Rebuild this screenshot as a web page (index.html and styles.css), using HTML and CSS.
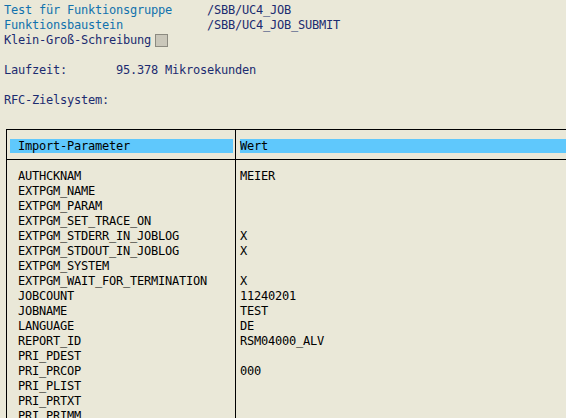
FILE: index.html
```html
<!DOCTYPE html>
<html lang="de">
<head>
<meta charset="utf-8">
<title>Funktionsbaustein Test</title>
<link rel="stylesheet" href="styles.css">
</head>
<body>
<div class="page">
  <div class="info">
    <div class="kv"><span class="label">Test für Funktionsgruppe</span><span class="val">/SBB/UC4_JOB</span></div>
    <div class="kv"><span class="label">Funktionsbaustein</span><span class="val">/SBB/UC4_JOB_SUBMIT</span></div>
    <div class="line"><span class="val">Klein-Groß-Schreibung</span><span class="check"></span></div>
    <div class="line"></div>
    <div class="kv short"><span class="val">Laufzeit:</span><span class="val">95.378 Mikrosekunden</span></div>
    <div class="line"></div>
    <div class="line"><span class="val">RFC-Zielsystem:</span></div>
  </div>

  <div class="table">
    <div class="thead">
      <div class="hcell left"><div class="bar">Import-Parameter</div></div>
      <div class="hcell right"><div class="bar">Wert</div></div>
    </div>
    <div class="tbody">
      <div class="col left">
        <div>AUTHCKNAM</div>
        <div>EXTPGM_NAME</div>
        <div>EXTPGM_PARAM</div>
        <div>EXTPGM_SET_TRACE_ON</div>
        <div>EXTPGM_STDERR_IN_JOBLOG</div>
        <div>EXTPGM_STDOUT_IN_JOBLOG</div>
        <div>EXTPGM_SYSTEM</div>
        <div>EXTPGM_WAIT_FOR_TERMINATION</div>
        <div>JOBCOUNT</div>
        <div>JOBNAME</div>
        <div>LANGUAGE</div>
        <div>REPORT_ID</div>
        <div>PRI_PDEST</div>
        <div>PRI_PRCOP</div>
        <div>PRI_PLIST</div>
        <div>PRI_PRTXT</div>
        <div>PRI_PRIMM</div>
      </div>
      <div class="col right">
        <div>MEIER</div>
        <div>&nbsp;</div>
        <div>&nbsp;</div>
        <div>&nbsp;</div>
        <div>X</div>
        <div>X</div>
        <div>&nbsp;</div>
        <div>X</div>
        <div>11240201</div>
        <div>TEST</div>
        <div>DE</div>
        <div>RSM04000_ALV</div>
        <div>&nbsp;</div>
        <div>000</div>
        <div>&nbsp;</div>
        <div>&nbsp;</div>
        <div>&nbsp;</div>
      </div>
    </div>
  </div>
</div>
</body>
</html>
```

FILE: styles.css
```css
html, body {
  margin: 0;
  padding: 0;
  background: #eae8d8;
  overflow: hidden;
}

body {
  width: 566px;
  height: 418px;
  font-family: "DejaVu Sans Mono", "Liberation Mono", monospace;
  font-size: 12px;
  letter-spacing: -0.22px;
  color: #000;
}

.page {
  padding: 3px 0 0 0;
}

.info {
  padding-left: 4px;
}

.kv {
  display: grid;
  grid-template-columns: 203px auto;
  height: 15px;
  line-height: 15px;
  white-space: nowrap;
}

.kv.short {
  grid-template-columns: 112px auto;
}

.line {
  display: flex;
  align-items: center;
  height: 15px;
  line-height: 15px;
  white-space: nowrap;
}

.label {
  color: #1172ad;
}

.val {
  color: #1c2c70;
}

.check {
  width: 11px;
  height: 11px;
  margin-left: 4px;
  background: #cac7ba;
  border: 1px solid #8c8a80;
}

.table {
  margin: 21px 0 0 6px;
  border-left: 1px solid #000;
  border-top: 1px solid #000;
}

.thead {
  display: grid;
  grid-template-columns: 229px 1fr;
  border-bottom: 1px solid #000;
}

.hcell {
  padding: 9px 0 6px 3px;
}

.hcell.left {
  padding-right: 2px;
  border-right: 1px solid #000;
}

.hcell.right {
  padding-left: 4px;
}

.bar {
  height: 14px;
  line-height: 14px;
  background: #5fc8fc;
  white-space: nowrap;
}

.hcell.left .bar {
  padding-left: 8px;
}

.tbody {
  display: grid;
  grid-template-columns: 229px 1fr;
}

.col {
  padding-top: 9px;
  line-height: 15px;
  white-space: nowrap;
}

.col.left {
  padding-left: 11px;
  border-right: 1px solid #000;
}

.col.right {
  padding-left: 4px;
}
```
